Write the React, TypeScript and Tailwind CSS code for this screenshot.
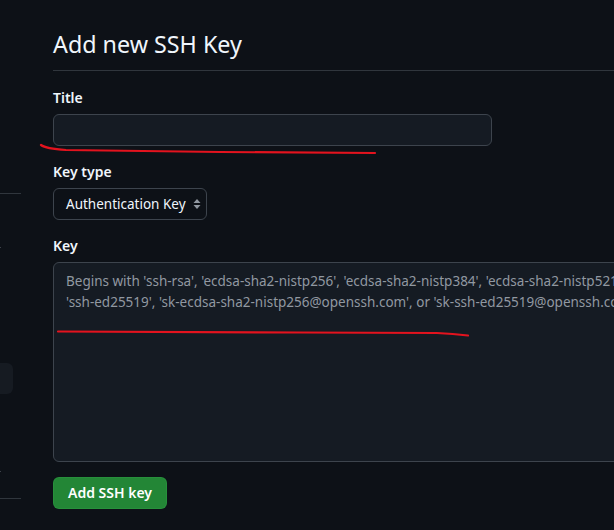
import { ChevronDown } from "lucide-react";

const fieldLabel = "block text-sm leading-5 font-semibold text-[#f0f6fc] mb-[6px]";

const SelectArrows = () => (
  <svg width="8" height="12" viewBox="0 0 8 12" className="ml-[7px]">
    <path d="M4 1 L7.5 5 L0.5 5 Z" fill="#9198a1" />
    <path d="M4 11 L7.5 7 L0.5 7 Z" fill="#9198a1" />
  </svg>
);

const Sidebar = () => (
  <aside className="w-[21px] shrink-0 flex flex-col overflow-hidden">
    <div className="h-[193px]" />
    <div className="h-px w-[21px] bg-[#30363d]" />
    <div className="h-[49px]" />
    <ChevronDown size={12} strokeWidth={2} className="-ml-[9px] text-[#9198a1]" />
    <div className="h-[108px]" />
    <div className="h-[31px] w-[13px] rounded-r-md bg-[#161b22]" />
    <div className="h-[73px]" />
    <ChevronDown size={12} strokeWidth={2} className="-ml-[9px] text-[#9198a1]" />
    <div className="h-[19px]" />
    <div className="h-px w-[21px] bg-[#30363d]" />
  </aside>
);

const App = () => {
  return (
    <div className="relative w-[614px] h-[530px] overflow-hidden bg-[#0d1117] flex font-['Noto_Sans','Liberation_Sans',sans-serif]">
      <Sidebar />

      <main className="ml-[32px] w-[720px] shrink-0 pt-[26px]">
        <div className="border-b border-[#30363d] pb-2 mb-[17px]">
          <h2 className="text-[23.3px] leading-9 font-normal text-[#f0f6fc]">Add new SSH Key</h2>
        </div>

        <label className={fieldLabel}>Title</label>
        <input
          type="text"
          className="block w-[439px] h-8 rounded-md border border-[#3d444d] bg-[#151b23] px-3 text-sm text-[#f0f6fc] outline-none"
        />

        <label className={`${fieldLabel} mt-4`}>Key type</label>
        <div className="flex items-center w-[154px] h-8 rounded-md border border-[#3d444d] bg-[#0d1117] pl-3 text-[13.5px] text-[#f0f6fc]">
          <span className="whitespace-nowrap">Authentication Key</span>
          <SelectArrows />
        </div>

        <label className={`${fieldLabel} mt-4`}>Key</label>
        <div className="h-[200px] rounded-md border border-[#3d444d] bg-[#151b23] px-3 pt-[8px] text-[13.5px] leading-[21px] text-[#9198a1]">
          <p className="whitespace-nowrap">
            Begins with 'ssh-rsa', 'ecdsa-sha2-nistp256', 'ecdsa-sha2-nistp384', 'ecdsa-sha2-nistp521',
          </p>
          <p className="whitespace-nowrap">
            'ssh-ed25519', 'sk-ecdsa-sha2-nistp256@openssh.com', or 'sk-ssh-ed25519@openssh.com'
          </p>
        </div>

        <button className="mt-[15px] flex items-center justify-center w-[114px] h-8 rounded-md border border-[#2ea043]/40 bg-[#238636] text-sm font-semibold text-white">
          Add SSH key
        </button>
      </main>

      {/* red marker strokes drawn over the page */}
      <svg className="absolute inset-0 pointer-events-none" width="614" height="530" viewBox="0 0 614 530">
        <path
          d="M41 145 C45 148, 52 149, 66 150 L220 152 L375 153"
          fill="none"
          stroke="#e3131e"
          strokeWidth="2.2"
          strokeLinecap="round"
        />
        <path
          d="M58 331.5 L300 332.5 L437 333 C450 333.5, 460 334.5, 468 335.5"
          fill="none"
          stroke="#e3131e"
          strokeWidth="2.2"
          strokeLinecap="round"
        />
      </svg>
    </div>
  );
};

export default App;
